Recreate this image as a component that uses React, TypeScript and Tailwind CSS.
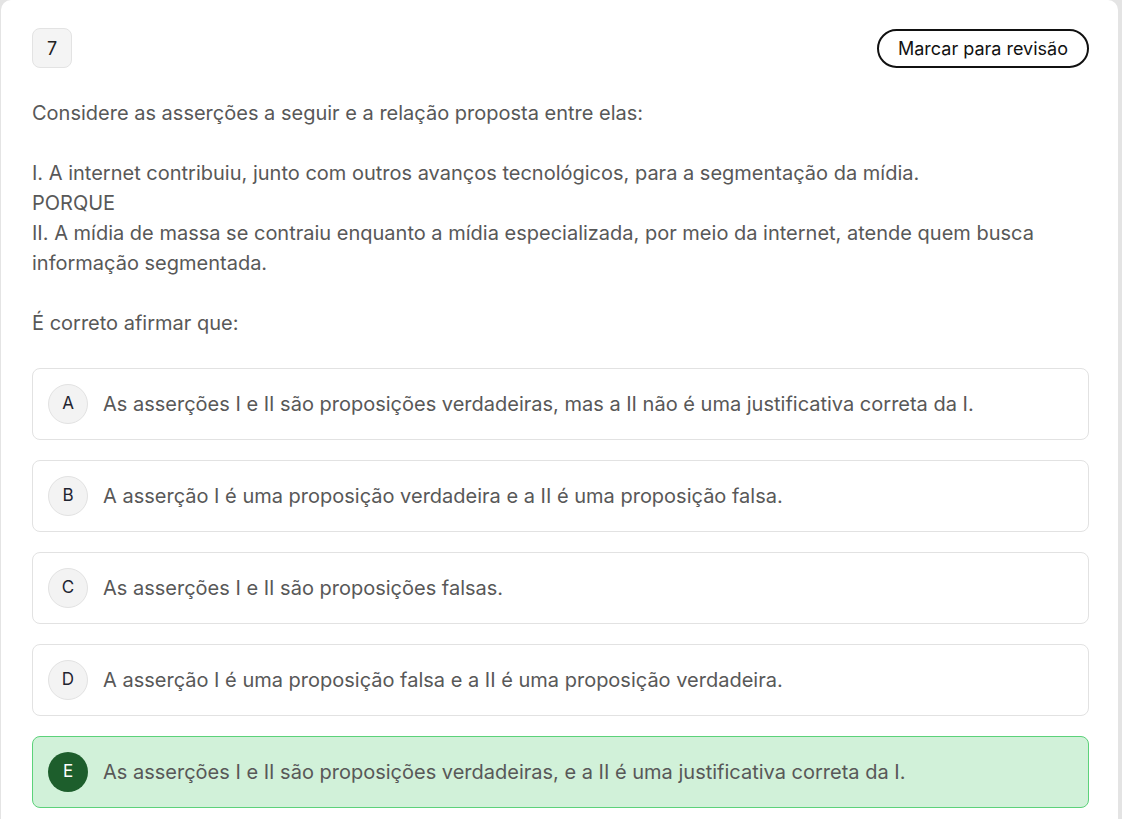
import React from "react";

const options = [
  { l: "A", t: "As asserções I e II são proposições verdadeiras, mas a II não é uma justificativa correta da I." },
  { l: "B", t: "A asserção I é uma proposição verdadeira e a II é uma proposição falsa." },
  { l: "C", t: "As asserções I e II são proposições falsas." },
  { l: "D", t: "A asserção I é uma proposição falsa e a II é uma proposição verdadeira." },
  { l: "E", t: "As asserções I e II são proposições verdadeiras, e a II é uma justificativa correta da I.", sel: true },
];

export default function App() {
  return (
    <div className="w-[1122px] h-[819px] overflow-hidden bg-[#e4e4e4] pl-px" style={{ fontFamily: "Inter, 'Noto Sans', sans-serif" }}>
      <div className="w-[1117px] h-[840px] bg-white rounded-tl-[10px] rounded-tr-[10px] pl-[31px] pr-[29px] pt-[28px]">
        <div className="flex items-center justify-between">
          <div className="w-10 h-10 rounded-lg bg-[#f4f4f4] border border-[#e3e3e3] flex items-center justify-center text-[18px] text-[#222]">7</div>
          <button className="h-[39px] px-[19px] rounded-full border-2 border-[#111] text-[18px] text-[#111] bg-white mt-[1px]">Marcar para revisão</button>
        </div>
        <div className="mt-[30px] text-[20px] leading-[30px] text-[#585858] whitespace-pre-line">
          {"Considere as asserções a seguir e a relação proposta entre elas:\n\nI. A internet contribuiu, junto com outros avanços tecnológicos, para a segmentação da mídia.\nPORQUE\nII. A mídia de massa se contraiu enquanto a mídia especializada, por meio da internet, atende quem busca informação segmentada.\n\nÉ correto afirmar que:"}
        </div>
        <div className="mt-[30px] flex flex-col gap-[20px]">
          {options.map((o) => (
            <div
              key={o.l}
              className={
                o.sel
                  ? "h-[72px] rounded-lg border border-[#5cd27a] bg-[#d1f1d9] flex items-center pl-[15px] gap-[15px]"
                  : "h-[72px] rounded-lg border border-[#e2e2e2] bg-white flex items-center pl-[15px] gap-[15px]"
              }
            >
              <div
                className={
                  o.sel
                    ? "w-10 h-10 rounded-full bg-[#1d5e2c] text-white flex items-center justify-center text-[17px] shrink-0"
                    : "w-10 h-10 rounded-full bg-[#f3f3f3] border border-[#e2e2e2] text-[#1f2430] flex items-center justify-center text-[17px] shrink-0"
                }
              >
                {o.l}
              </div>
              <span className="text-[20px] text-[#585858]">{o.t}</span>
            </div>
          ))}
        </div>
      </div>
    </div>
  );
}
